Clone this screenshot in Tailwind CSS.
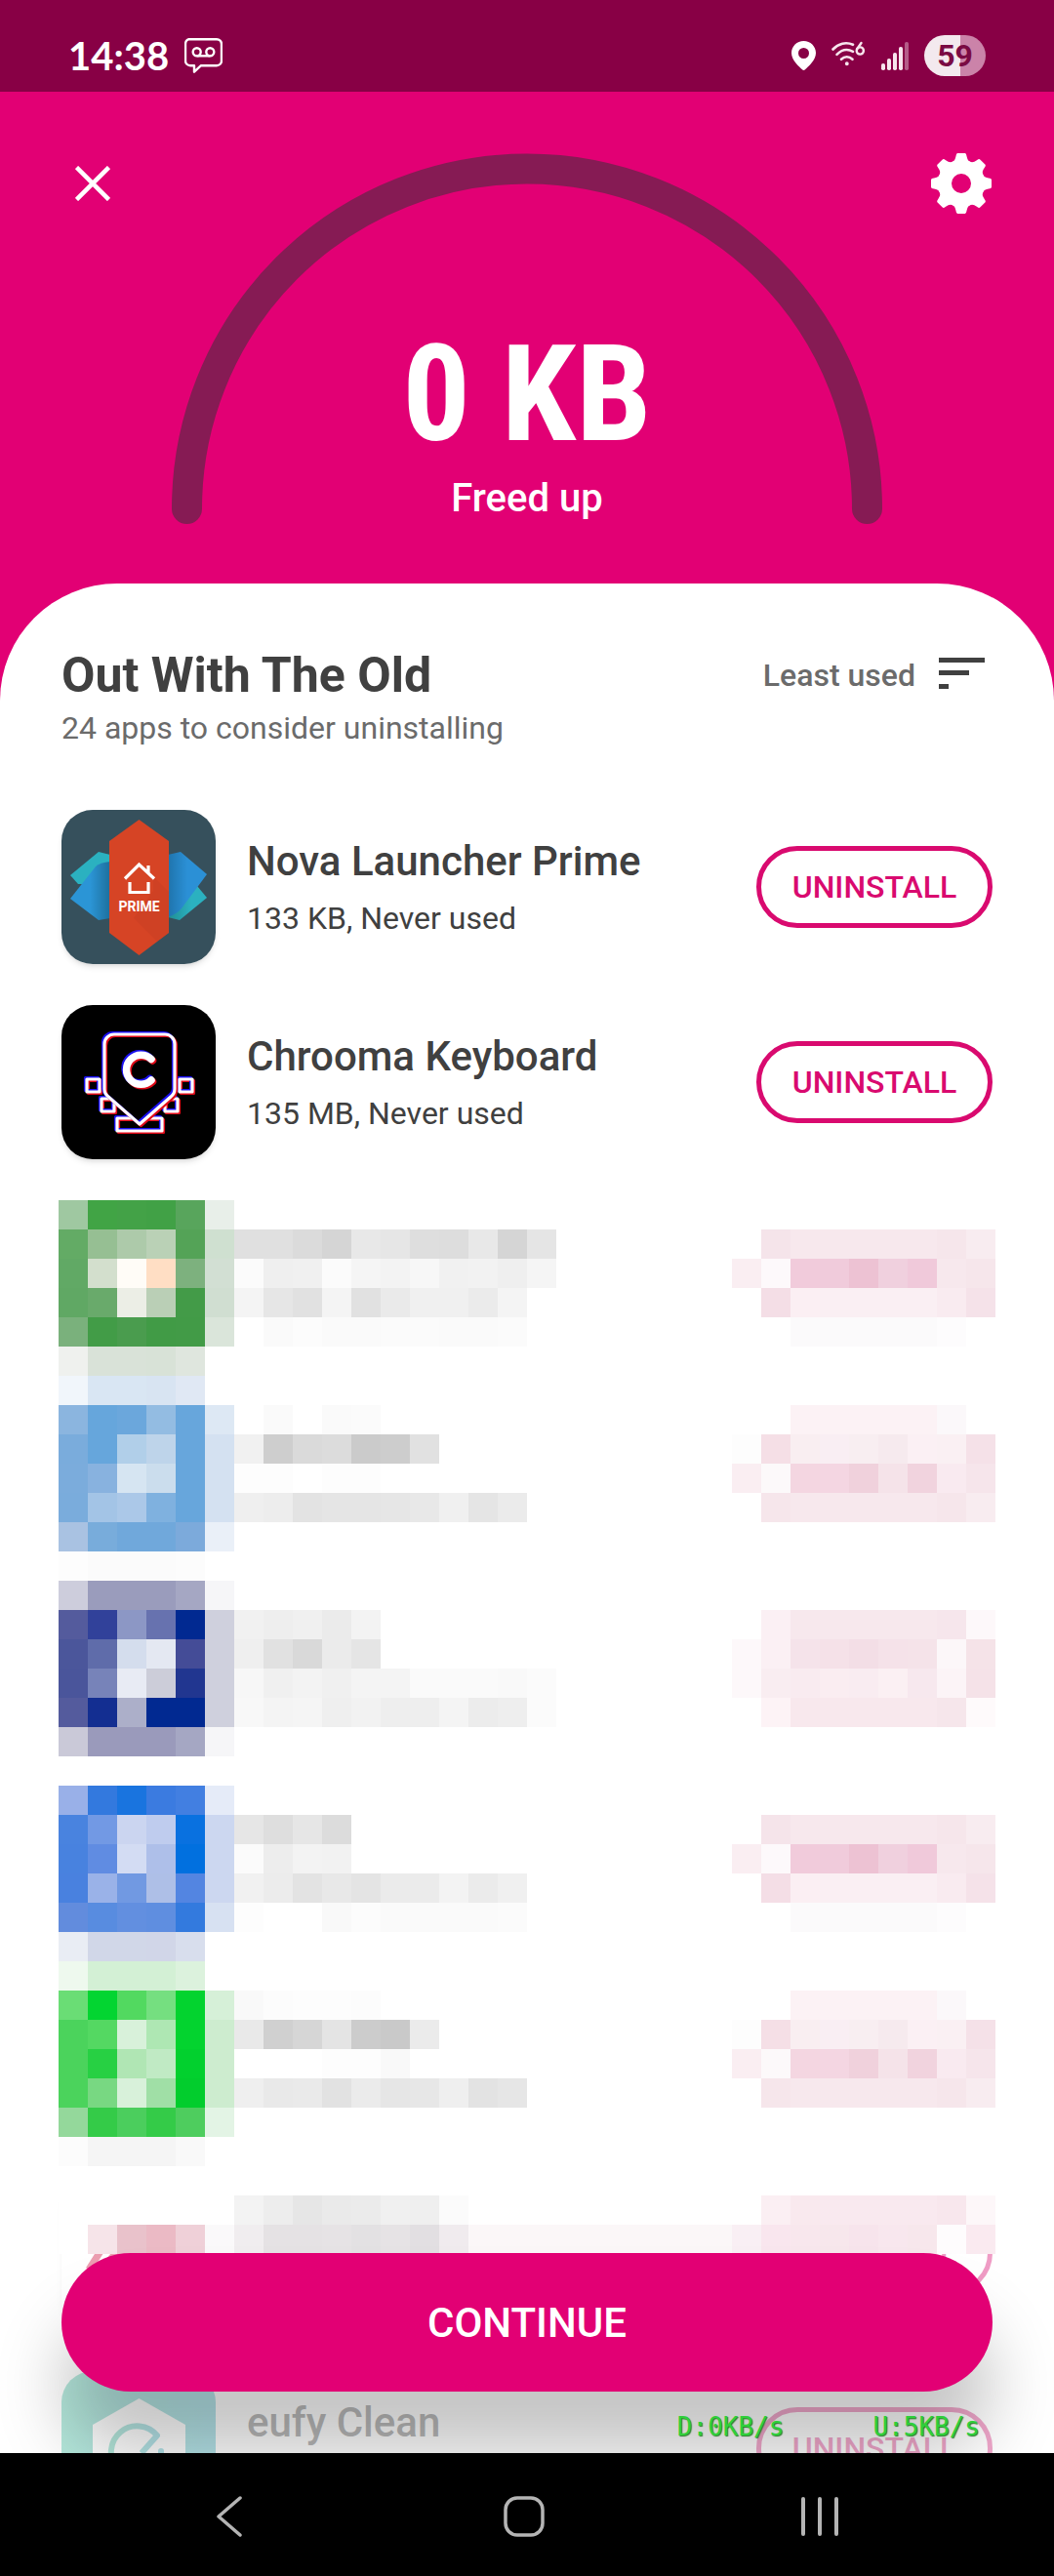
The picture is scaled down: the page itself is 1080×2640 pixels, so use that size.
<!DOCTYPE html>
<html lang="en">
<head>
  <meta charset="UTF-8">
  <meta name="viewport" content="width=device-width, initial-scale=1.0">
  <title>Out With The Old</title>
  <script src="https://cdn.jsdelivr.net/npm/@tailwindcss/browser@4"></script>
</head>
<body class="h-screen flex flex-col overflow-hidden bg-[#e20074] font-[Roboto,sans-serif] text-[#404040]">

  <!-- Status bar -->
  <div class="flex h-[94px] shrink-0 items-center justify-between bg-[#880045] px-[70px] pt-5 text-white">
    <div class="flex items-center gap-4">
      <span class="font-[Lato,sans-serif] text-[40px] leading-[48px] font-bold">14:38</span>
      <svg class="h-9 w-[39px]" viewBox="0 0 39 36" fill="none" stroke="currentColor" stroke-width="2.4">
        <path d="M6 1.2h27a5 5 0 0 1 5 5v17a5 5 0 0 1-5 5H17l-7 6.500v-6.500H6a5 5 0 0 1-5-5V6a5 5 0 0 1 5-5Z" stroke-linejoin="round"/>
        <circle cx="12.7" cy="14.3" r="4"/>
        <circle cx="26.3" cy="14.3" r="4"/>
        <path d="M12.7 18.3h13.6"/>
      </svg>
    </div>
    <div class="flex items-center gap-4">
      <svg class="h-[30px] w-[25px]" viewBox="0 0 25 30" fill="currentColor">
        <path fill-rule="evenodd" d="M12.5 0C5.6 0 0 5.5 0 12.3 0 20 8 26.5 11.3 29.5a1.8 1.8 0 0 0 2.4 0C17 26.5 25 20 25 12.3 25 5.5 19.4 0 12.5 0Zm0 7a5.5 5.5 0 1 1 0 11 5.5 5.5 0 0 1 0-11Z"/>
      </svg>
      <svg class="h-[30px] w-[35px]" viewBox="0 0 35 30" fill="none" stroke="#f7e6ee" stroke-width="2.6" stroke-linecap="round">
        <path d="M1.5 8.5C7 2.500 15 .500 22 3.800"/>
        <path d="M5.5 13.800c5-5 11-6 16.500-3"/>
        <path d="M10 18.8c3.5-3.3 8-3.3 11.5 0"/>
        <circle cx="15.8" cy="23.3" r="1.2" fill="#f7e6ee" stroke-width="1.5"/>
        <circle cx="29.3" cy="10" r="3.600" stroke-width="2.4"/>
        <path d="M26.200 8.300 30.500 2" stroke-width="2.4"/>
      </svg>
      <svg class="h-[30px] w-7" viewBox="0 0 28 30" fill="#f7e6ee">
        <rect x="0" y="23" width="4" height="7" rx="1.8"/>
        <rect x="6" y="18" width="4" height="12" rx="1.8"/>
        <rect x="12" y="12" width="4" height="18" rx="1.8"/>
        <rect x="18" y="6" width="4" height="24" rx="1.8"/>
        <rect x="24" y="1" width="4" height="29" rx="1.8" opacity=".4"/>
      </svg>
      <div class="flex h-[42px] w-[63px] items-center justify-center rounded-full bg-linear-to-r from-[#f3e9ee] from-59% to-[#cb83a9] to-59% text-[32px] leading-none font-bold text-[#7a0a43]">59</div>
    </div>
  </div>

  <!-- Gauge header -->
  <header class="flex h-[504px] shrink-0 items-start px-16 pt-[63px] text-white">
    <button aria-label="Close" class="flex size-[62px] items-center justify-center">
      <svg class="size-9" viewBox="0 0 36 36" fill="none" stroke="currentColor" stroke-width="4.5">
        <path d="M1.5 1.5l33 33M34.5 1.5l-33 33"/>
      </svg>
    </button>
    <div class="relative mx-[50px] flex-1">
      <svg class="w-full" viewBox="0 0 728 380" fill="none">
        <path d="M15.5 364.5A348.5 348.5 0 0 1 712.5 364.5" stroke="#861b54" stroke-width="31" stroke-linecap="round"/>
      </svg>
      <div class="absolute inset-x-0 bottom-[2px] text-center">
        <p class="mb-4 font-['Roboto_Condensed',Roboto,sans-serif] text-[138px] leading-[134px] font-bold">0 KB</p>
        <p class="text-[40px] leading-[48px] font-medium">Freed up</p>
      </div>
    </div>
    <button aria-label="Settings" class="size-[62px]">
      <svg class="size-[62px]" viewBox="-31 -31 62 62" fill="currentColor">
        <circle r="17" fill="none" stroke="currentColor" stroke-width="14"/>
        <path id="tooth" d="M-9.2-22.2C-7-22.8-6.1-25-5.5-28Q-5.2-31-3.8-31H3.8Q5.2-31 5.5-28C6.1-25 7-22.8 9.2-22.2L0-12Z"/>
        <use href="#tooth" transform="rotate(45)"/>
        <use href="#tooth" transform="rotate(90)"/>
        <use href="#tooth" transform="rotate(135)"/>
        <use href="#tooth" transform="rotate(180)"/>
        <use href="#tooth" transform="rotate(225)"/>
        <use href="#tooth" transform="rotate(270)"/>
        <use href="#tooth" transform="rotate(315)"/>
      </svg>
    </button>
  </header>

  <!-- App list -->
  <main class="relative min-h-0 flex-1 overflow-hidden rounded-t-[120px] bg-white px-[63px] pt-16">
    <div class="mb-[41px] flex items-start justify-between">
      <div>
        <h1 class="text-[50px] leading-[60px] font-bold">Out With The Old</h1>
        <p class="mt-0.5 text-[32px] leading-[44px] text-[#6b6b6b]">24 apps to consider uninstalling</p>
      </div>
      <button class="mt-2 mr-2 flex items-start gap-6 text-[32px] leading-[44px] font-medium text-[#6b6b6b]">
        Least used
        <svg class="mt-1 h-8 w-[47px]" viewBox="0 0 47 32" fill="#404040">
          <path d="M0 0h47v5H0zM0 13h31v5H0zM0 27h10v5H0z"/>
        </svg>
      </button>
    </div>

    <ul>
      <li class="flex h-[200px] items-center">
        <svg class="size-[158px] shrink-0 rounded-[32px] shadow-md" viewBox="0 0 158 158">
          <defs>
            <linearGradient id="novaLeft"><stop offset=".5" stop-color="#2b95d6"/><stop offset="1" stop-color="#1d6f9c"/></linearGradient>
            <linearGradient id="novaRight"><stop offset="0" stop-color="#1f74ac"/><stop offset=".5" stop-color="#2b90d6"/></linearGradient>
            <linearGradient id="novaTeal"><stop offset="0" stop-color="#208d93"/><stop offset=".6" stop-color="#2bb1c0"/></linearGradient>
          </defs>
          <path fill="#36505c" d="M0 0h158v158H0z"/>
          <path fill="#2bb1c0" d="M9 67 38 43l12 3v30H17z"/>
          <path fill="url(#novaLeft)" d="M9 91 35 58q4-4 15-5v58l-12 2z"/>
          <path fill="url(#novaTeal)" d="M139 78l10 12-28 23-12-3V90z"/>
          <path fill="url(#novaRight)" d="M109 46l13-3 27 23-26 35q-5 6-14 9z"/>
          <path fill="#d64425" d="M79.5 10 110 32v94l-30.5 23L49 126V32z"/>
          <path fill="#c23d22" d="M94 68l16 16v42l-12 9-24-24 20-28z" opacity=".35"/>
          <path d="M65 70.5 79.5 56 95 70.5M89 57v8M70 74v10.5h19V74" fill="none" stroke="#fff" stroke-width="3.2"/>
          <text x="79.5" y="104" text-anchor="middle" fill="#fff" class="text-[14px] font-bold">PRIME</text>
        </svg>
        <div class="ml-8 flex-1">
          <h2 class="mt-0.5 text-[42px] leading-[52px] font-medium">Nova Launcher Prime</h2>
          <p class="mt-2.5 text-[32px] leading-[44px]">133 KB, Never used</p>
        </div>
        <button class="h-[84px] w-[242px] rounded-full border-[5px] border-[#d90a6f] text-[32px] font-medium text-[#d90a6f]">UNINSTALL</button>
      </li>

      <li class="flex h-[200px] items-center">
        <svg class="size-[158px] shrink-0 rounded-[32px] shadow-md" viewBox="0 0 158 158">
          <path d="M0 0h158v158H0z"/>
          <defs>
            <g id="robotKeys" fill="none" stroke-width="3.2" stroke-linejoin="round">
              <path d="M26 76h13v13H26zM121 76h13v13h-13zM41 96h13v13H41zM106 96h13v13h-13zM57 116h46v13H57z"/>
            </g>
            <g id="robotFace" fill="none" stroke-width="3.2" stroke-linejoin="round">
              <path d="M54 30h52a10 10 0 0 1 10 10v46q0 5-4 8L80 122 48 94q-4-3-4-8V40a10 10 0 0 1 10-10z"/>
              <path d="M92 55.5a15 15 0 1 0 0 21.5" stroke-width="7.5" stroke-linecap="round"/>
            </g>
          </defs>
          <use href="#robotKeys" stroke="#e00a18" x="1.5" y="1.5"/>
          <use href="#robotKeys" stroke="#1a10f0" x="-1.5" y="-1.5"/>
          <use href="#robotKeys" stroke="#fff"/>
          <path d="M44 30h72v60L80 122 44 90z"/>
          <use href="#robotFace" stroke="#e00a18" x="1.5" y="1.5"/>
          <use href="#robotFace" stroke="#1a10f0" x="-1.5" y="-1.5"/>
          <use href="#robotFace" stroke="#fff"/>
        </svg>
        <div class="ml-8 flex-1">
          <h2 class="mt-0.5 text-[42px] leading-[52px] font-medium">Chrooma Keyboard</h2>
          <p class="mt-2.5 text-[32px] leading-[44px]">135 MB, Never used</p>
        </div>
        <button class="h-[84px] w-[242px] rounded-full border-[5px] border-[#d90a6f] text-[32px] font-medium text-[#d90a6f]">UNINSTALL</button>
      </li>

      <!-- Pixelated apps -->
      <li class="relative -mx-[3px] h-[1200px] pt-[21px]">
        <div class="absolute inset-x-[3px] bottom-0 flex h-[200px] items-center justify-between opacity-40">
          <svg class="size-[158px] rounded-[32px] shadow-md" viewBox="0 0 158 158" fill="none" stroke="#d0103f" stroke-width="7">
            <path d="M42 74 28 96M60 74 46 90"/>
          </svg>
          <button class="h-[84px] w-[242px] rounded-full border-[5px] border-[#d90a6f] text-[32px] font-medium text-[#d90a6f]">UNINSTALL</button>
        </div>
        <div class="relative flex items-end">
          <svg id="mosaicLeft" class="h-[1080px] w-[510px] bg-white" viewBox="0 0 17 36" shape-rendering="crispEdges"></svg>
          <div class="h-[30px] flex-1 bg-[#fbf7f8]"></div>
          <svg id="mosaicRight" class="h-[1080px] w-[270px] bg-white" viewBox="0 0 9 36" shape-rendering="crispEdges"></svg>
        </div>
      </li>

      <li class="flex h-[200px] items-center opacity-35">
        <svg class="size-[158px] shrink-0 rounded-[32px]" viewBox="0 0 158 158">
          <defs>
            <linearGradient id="eufy"><stop offset="0" stop-color="#2fc09c"/><stop offset="1" stop-color="#2fb4c4"/></linearGradient>
          </defs>
          <path fill="url(#eufy)" d="M0 0h158v158H0z"/>
          <path fill="#fff" d="M79.5 28 127 55v49l-47.5 27L32 104V55z"/>
          <path d="M57 100a24 24 0 1 1 41-34L82 84" fill="none" stroke="url(#eufy)" stroke-width="6" stroke-linejoin="round"/>
          <path d="M102 82v6" stroke="#2fb4c4" stroke-width="6" stroke-linecap="round"/>
        </svg>
        <div class="ml-8 flex-1">
          <h2 class="mt-0.5 text-[42px] leading-[52px] font-medium">eufy Clean</h2>
          <p class="mt-2.5 text-[32px] leading-[44px]">&nbsp;</p>
        </div>
        <button class="h-[84px] w-[242px] rounded-full border-[5px] border-[#d90a6f] text-[32px] font-medium text-[#d90a6f]">UNINSTALL</button>
      </li>
    </ul>

    <button class="absolute inset-x-[63px] bottom-[63px] h-[142px] rounded-full bg-[#e20074] text-[42px] font-medium text-white shadow-[0_64px_70px_rgba(0,0,0,0.23)]">CONTINUE</button>

    <!-- Network speed overlay -->
    <div class="absolute right-[76px] bottom-[11px] flex gap-[91px] font-['DejaVu_Sans_Mono',monospace] text-[26px] leading-8 text-[#2fd03a] [text-shadow:1px_1px_1px_#2a7a2a]">
      <span>D:0KB/s</span>
      <span>U:5KB/s</span>
    </div>
  </main>

  <!-- Navigation bar -->
  <nav class="grid h-[126px] shrink-0 grid-cols-3 items-center bg-black pt-1 pr-[89px] pl-[84px] text-[#b4b4b4]">
    <button aria-label="Back" class="flex justify-center">
      <svg class="h-[42px] w-[26px]" viewBox="0 0 26 42" fill="none" stroke="currentColor" stroke-width="3.5" stroke-linecap="round" stroke-linejoin="round"><path d="M24 2 2 21l22 19"/></svg>
    </button>
    <button aria-label="Home" class="flex justify-center">
      <svg class="size-[42px]" viewBox="0 0 42 42" fill="none" stroke="currentColor" stroke-width="3.5"><rect x="2" y="2" width="38" height="38" rx="12"/></svg>
    </button>
    <button aria-label="Recents" class="flex justify-center">
      <svg class="h-10 w-[38px]" viewBox="0 0 38 40" fill="none" stroke="currentColor" stroke-width="4" stroke-linecap="round"><path d="M2 2v36M19 2v36M36 2v36"/></svg>
    </button>
  </nav>

  <script>
    // One line per row of cells, "-" leaves a cell empty
    const LEFT = {
      0: '9fc8a1 41a445 43a247 41a146 58a55c e8efe9',
      1: '63ab65 96bf93 adcaaa bad1b6 54a357 cfe0d0 e0e0e0 e0e0e0 dbdbdb d5d5d5 e8e8e8 e6e6e6 dedede dddddd e8e8e8 d5d5d5 e5e5e5',
      2: '61a965 d3dfcd fffcf7 ffdec4 7db17e d2dfd3 fbfbfb efefef f0f0f0 fbfbfb f5f5f5 f3f3f3 f7f7f7 f1f1f1 f2f2f2 efefef f5f5f5',
      3: '60a864 69aa6b eceee6 bacfb6 439b48 d0ded1 f4f4f4 e6e6e6 e1e1e1 f4f4f4 e1e1e1 eaeaea f0f0f0 f0f0f0 ebebeb f4f4f4',
      4: '7ab17c 429c47 4a9c4e 419b46 429b47 dae5da - fafafa fcfcfc fafafa fafafa fbfbfb fbfbfb fafafa fafafa fbfbfb',
      5: 'eff1ee d9e2d8 d9e2d8 d8e2d7 dfe6de',
      6: 'f1f6fb d9e6f3 d9e6f3 d8e4f2 e0e8f4',
      7: '8bb5df 66a6dc 6ba7dc 93bce2 67a6dc dde8f4 - fafafa - fafafa fbfbfb',
      8: '7aacdc 66a6dc b1cfe9 bed4ea 67a6dc d4e1f1 f1f1f1 cecece dadada dcdcdc cbcbcb cdcdcd e1e1e1',
      9: '7bacdc 88b2df d6e5f2 cbdded 67a6dc d4e1f1 fdfdfd fdfdfd - fdfdfd fdfdfd',
      10: '7aacdc a3c4e6 abc8e8 7fb1df 67a6dc d4e1f1 efefef ededed e3e3e3 e5e5e5 e5e5e5 e6e6e6 e8e8e8 f0f0f0 e5e5e5 ebebeb',
      11: 'a9c2e2 78acdb 70a8db 70a8db 7caadb eaf0f8',
      12: 'fdfdfd fbfbfb fbfbfb fbfbfb fcfcfc',
      13: 'cdcddc 9a9cbc 9a9cbc 9a9cbc a5a7c3 f6f6f8',
      14: '545b9d 31419a 8c97c5 6772af 012991 cfd0dd f1f1f1 eeeeee f0f0f0 ebebeb f3f3f3',
      15: '4b569b 5f6caa d4dded e4e8f2 444c97 cfd0dd efefef e1e1e1 d9d9d9 ebebeb e5e5e5',
      16: '4a559b 7783b9 e8ebf4 cccdd9 213690 cfd0dd f7f7f7 f0f0f0 f3f3f3 f0f0f0 f4f4f4 f4f4f4 fafafa fafafa fafafa f9f9f9 fbfbfb',
      17: '545b9d 132e91 acafc9 012991 012991 cfd0dd f8f8f8 f4f4f4 f5f5f5 efefef f2f2f2 eeeeee eeeeee f4f4f4 ececec eeeeee fbfbfb',
      18: 'cac9d8 9a9abb 9a9abb 9a9abb a5a7c3 f6f6f8',
      20: '99b0e8 3379de 1974df 3b7be0 427fe1 e5ebf8',
      21: '4983df 7299e4 cbd5f0 bfccee 0971e0 ccd7f0 e6e6e6 dedede e6e6e6 dcdcdc',
      22: '4882df 608ce2 d3dcf3 aebfe9 0170df ccd7f0 fbfbfb ededed f3f3f3 f2f2f2',
      23: '4981df 9ab2e8 7199e2 aebfe7 5385e1 ccd7f0 f1f1f1 ececec e3e3e3 e8e8e8 e4e4e4 ebebeb ebebeb f3f3f3 ebebeb f0f0f0',
      24: '628cdd 588ce0 628fe0 5f8ee0 337ade d7e1f2 fdfdfd - - f9f9f9 fcfcfc fafafa fafafa fafafa fafafa fbfbfb',
      25: 'e9edf4 d1d7e8 d1d7e8 d1d6e8 d8deed',
      26: 'eef9ee d3f0d5 d3f0d5 d3f0d5 dcf2dd',
      27: '6add75 03d531 52d960 75df80 03d32f d6f0d8 f9f9f9 fcfcfc fdfdfd fdfdfd fcfcfc',
      28: '4bd35c 54d862 d8f1da aee7b3 03d32f cdeccf e9e9e9 d0d0d0 d6d6d6 e4e4e4 cccccc c9c9c9 ebebeb',
      29: '4bd35c 27d043 b0e6b4 c0eac4 02d02e cdeccf - - - fdfdfd fdfdfd f9f9f9',
      30: '4bd35c 78d882 d8f1da a0dfa6 02cd2d cdeccf efefef e9e9e9 eaeaea e2e2e2 ebebeb e6e6e6 e7e7e7 efefef e3e3e3 e6e6e6',
      31: '94d89b 34cb48 4bce5d 34cb48 4ecd5e e3f4e5',
      32: 'fcfcfc f5f5f5 f5f5f5 f5f5f5 f9f9f9',
      34: '- - - - - - f3f3f3 ededed e6e6e6 eaeaea ebebeb f0f0f0 efefef fbfbfb',
      35: '- f6e4e9 e9c2cb ebbac5 efd0d8 faf9fa f0edef e5e2e4 e5e2e4 e6e3e5 e3e1e3 e6e3e5 e2dfe2 f0ebee fbf7f8 fbf7f8 fbf7f8'
    };

    const oddTop = '- f5e4ea f7e8ed f7e8ed f7e8ed f7e8ed f7e8ed f6e6eb f8ecf0';
    const oddText = 'faeef2 fdf9fb f1cbdb f0cbdb edc2d3 f0d0de f0c9da f7e8ed f6e6eb';
    const oddLow = '- f4dee6 fbeff3 faeff3 faeff3 faeff3 faeff3 f9ebf0 f5e2e9';
    const oddEnd = '- - fbfafb fbfafb fbfafb fbfafb fbfafb fdfcfd';
    const evenTop = '- - fcf2f5 fcf2f5 fcf2f5 fcf2f5 fcf2f5 fbf8fa';
    const evenHigh = 'fdfdfd f5dfe6 f9eef1 f9eef3 f8eef1 f6eaee fbf0f4 faf0f3 f5e1e8';
    const evenText = 'faeef2 fcf9fa f4d6e1 f4d6e2 f0d1dc f5e3e9 f1d3de f9eaf0 f6e5eb';
    const evenEnd = '- f6e6eb f7e8ed f7e8ed f7e8ed f7e8ed f7e8ed f6e6eb f8ecf0';
    const RIGHT = {
      1: oddTop, 2: oddText, 3: oddLow, 4: oddEnd,
      7: evenTop, 8: evenHigh, 9: evenText, 10: evenEnd,
      14: '- fbf0f4 f7e8ed f7e8ed f7e8ed f7e8ed f7e8ed f6e6ec fdf8fa',
      15: 'fdf8fa fbf0f4 f5e3ea f5e1e8 f3dee6 f5e2e9 f5e3e9 fcf7f9 f5e3e8',
      16: 'fdf8fa f9edf1 f9ebf0 faedf1 f9ecf1 fbf0f3 f7e8ee fcf4f7 f5e2e8',
      17: '- fdf3f6 f8e8ed f8e8ed f8e8ed f8e8ed f8e8ed f6e6eb fefafb',
      21: oddTop, 22: oddText, 23: oddLow, 24: oddEnd,
      27: evenTop, 28: evenHigh, 29: evenText, 30: evenEnd,
      34: '- fbeff3 f9e9ee f9e9ef f9e9ef f9e9ef f9e9ef f8e7ed fdf7f9',
      35: 'f9eff4 f9e6ee f8e7ed f7e7ec f7e4ec f8e7ee f7e7ec fefcfd faeaf0'
    };

    function drawMosaic(id, rows) {
      document.getElementById(id).innerHTML = Object.entries(rows).map(([y, row]) =>
        row.split(' ').map((color, x) => color === '-' ? '' :
          `<rect x="${x}" y="${y}" width="1" height="1" fill="#${color}"/>`
        ).join('')
      ).join('');
    }

    drawMosaic('mosaicLeft', LEFT);
    drawMosaic('mosaicRight', RIGHT);
  </script>
</body>
</html>
